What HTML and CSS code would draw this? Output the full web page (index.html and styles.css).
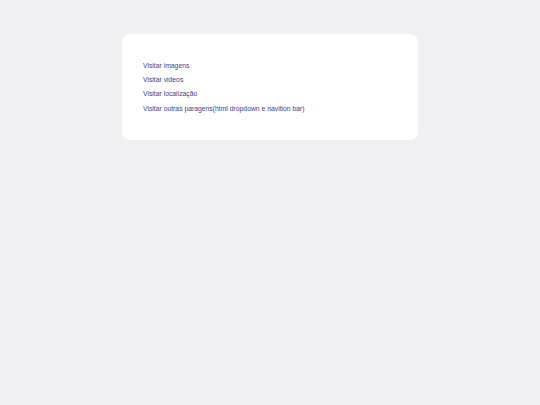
FILE: index.html
```html
<!DOCTYPE html>
<html>
<head>
<meta charset="utf-8">
<link rel="stylesheet" href="styles.css">
</head>
<body>
<div class="card">
  <ul class="links">
    <li><a href="#">Visitar imagens</a></li>
    <li><a href="#">Visitar videos</a></li>
    <li><a href="#">Visitar localização</a></li>
    <li><a href="#">Visitar outras paragens(html dropdown e navition bar)</a></li>
  </ul>
</div>
</body>
</html>
```
FILE: styles.css
```css
html, body {
  margin: 0;
  padding: 0;
  background: #f0f0f2;
  font-family: "Liberation Sans", Arial, sans-serif;
}
body {
  padding-top: 34px;
}
.card {
  width: 296px;
  height: 106px;
  box-sizing: border-box;
  margin-left: 122px;
  background: #ffffff;
  border-radius: 8px;
  padding: 24.5px 21px;
}
.links {
  list-style: none;
  margin: 0;
  padding: 0;
}
.links li {
  height: 14.4px;
  line-height: 14.4px;
  font-size: 6.8px;
}
.links a {
  color: #42428f;
  text-decoration: none;
}
```
